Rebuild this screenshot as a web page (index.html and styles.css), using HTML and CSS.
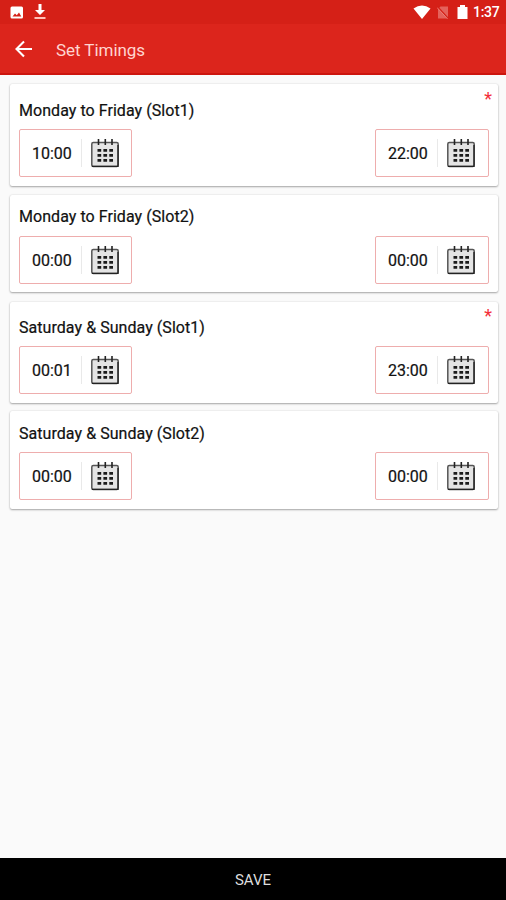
FILE: index.html
```html
<!DOCTYPE html>
<html lang="en">
<head>
<meta charset="utf-8">
<title>Set Timings</title>
<link rel="stylesheet" href="styles.css">
</head>
<body>
<svg class="defs" width="0" height="0" aria-hidden="true">
  <symbol id="calendar" viewBox="0 0 30 30">
    <rect x="1.8" y="4.5" width="26.4" height="24" rx="1.5" fill="#e4e4e4" stroke="#555" stroke-width="1.5"/>
    <path d="M2 28.4H28V7" fill="none" stroke="#222" stroke-width="1.3"/>
    <path d="M8.5 1V7M15.3 1V7M22 1V7" stroke="#222" stroke-width="1.6"/>
    <path d="M7.5 12.4H23M7.5 17.4H23M7.5 22.4H23" stroke="#1b1b1b" stroke-width="2.7" stroke-dasharray="3.7 2.2"/>
  </symbol>
</svg>
<header class="status">
  <svg class="picture" viewBox="0 0 14 13"><rect x=".5" y=".5" width="12.5" height="12" rx="1.5" fill="#fff"/><path d="M2.5 10.5 5 7.5 6.8 9.3 9 6.5 11.3 10.5Z" fill="#d52017"/></svg>
  <svg class="download" viewBox="0 0 12 16"><path d="M4.5 0H7.5V6H11L6 11 1 6H4.5Z" fill="#fff"/><path d="M.5 14H11.5" stroke="#ffc0b8" stroke-width="2"/></svg>
  <svg class="wifi" viewBox="0 0 18 14"><path d="M9 14 .5 3.5Q9-2.5 17.5 3.5Z" fill="#fff"/></svg>
  <svg class="sim" viewBox="0 0 12 13"><path d="M3.5.5H11V12.5H1V3Z" fill="#e4625b"/><path d="M.5.8 11.5 12.8" stroke="#d52017" stroke-width="1.6"/><path d="M0 1.5 10.5 12.8" stroke="#f09089" stroke-width=".8"/></svg>
  <svg class="battery" viewBox="0 0 11 14"><path d="M3 0H8V2H10.5V14H.5V2H3Z" fill="#fff"/></svg>
  <span class="clock">1:37</span>
</header>
<nav class="toolbar">
  <svg class="back" viewBox="0 0 18 18"><path d="M17 9H2M9 1.5 1.5 9 9 16.5" fill="none" stroke="#fff" stroke-width="2.1"/></svg>
  <h1>Set Timings</h1>
</nav>
<main>
  <section class="card weekday-one">
    <span class="required">*</span>
    <h2>Monday to Friday (Slot1)</h2>
    <div class="times">
      <div class="time"><span>10:00</span><svg><use href="#calendar"/></svg></div>
      <div class="time"><span>22:00</span><svg><use href="#calendar"/></svg></div>
    </div>
  </section>
  <section class="card weekday-two">
    <h2>Monday to Friday (Slot2)</h2>
    <div class="times">
      <div class="time"><span>00:00</span><svg><use href="#calendar"/></svg></div>
      <div class="time"><span>00:00</span><svg><use href="#calendar"/></svg></div>
    </div>
  </section>
  <section class="card weekend-one">
    <span class="required">*</span>
    <h2>Saturday &amp; Sunday (Slot1)</h2>
    <div class="times">
      <div class="time"><span>00:01</span><svg><use href="#calendar"/></svg></div>
      <div class="time"><span>23:00</span><svg><use href="#calendar"/></svg></div>
    </div>
  </section>
  <section class="card weekend-two">
    <h2>Saturday &amp; Sunday (Slot2)</h2>
    <div class="times">
      <div class="time"><span>00:00</span><svg><use href="#calendar"/></svg></div>
      <div class="time"><span>00:00</span><svg><use href="#calendar"/></svg></div>
    </div>
  </section>
</main>
<button class="save">SAVE</button>
</body>
</html>
```
FILE: styles.css
```css
* { box-sizing: border-box; }
body {
  margin: 0;
  height: 900px;
  display: flex;
  flex-direction: column;
  background: #fafafa;
  color: #111;
  font-family: Roboto, sans-serif;
  overflow: hidden;
}
svg { display: block; flex: none; }
.defs { position: absolute; }
.status {
  flex: none;
  height: 24px;
  display: flex;
  align-items: center;
  padding: 0 7px 0 10px;
  background: #d52017;
}
.picture { width: 14px; height: 13px; }
.download { width: 12px; height: 16px; margin-left: 10px; }
.wifi { width: 18px; height: 14px; margin-left: auto; }
.sim { width: 12px; height: 13px; margin-left: 6px; }
.battery { width: 11px; height: 14px; margin-left: 8px; }
.clock {
  width: 26px;
  margin-left: 5px;
  color: #fff;
  font-size: 14px;
  font-weight: 500;
  letter-spacing: -.3px;
  line-height: 24px;
  white-space: nowrap;
}
.toolbar {
  flex: none;
  height: 51px;
  display: flex;
  align-items: center;
  padding: 0 15px;
  background: #dc251c;
  border-bottom: 2px solid #cc150e;
}
.back { width: 18px; height: 18px; }
.toolbar h1 {
  margin: 2px 0 0 23px;
  color: #ffd5d0;
  font-size: 17px;
  font-weight: 400;
  letter-spacing: -.05px;
  line-height: 24px;
}
main { flex: 1; padding: 9px 8px 0 10px; }
.card {
  position: relative;
  padding: 0 9px;
  background: #fff;
  border-radius: 2px;
  box-shadow: 0 1px 2px rgba(0, 0, 0, .32), 0 0 2px rgba(0, 0, 0, .12);
}
.weekday-one { height: 102px; padding-top: 17px; }
.weekday-two { height: 97px; padding-top: 12px; margin-top: 9px; }
.weekday-two h2 { margin-bottom: 9px; }
.weekend-one { height: 101px; padding-top: 16px; margin-top: 10px; }
.weekend-two { height: 98px; padding-top: 13px; margin-top: 8px; }
.card h2 {
  margin: 0 0 8px;
  font-size: 16px;
  font-weight: 400;
  letter-spacing: .05px;
  line-height: 20px;
  -webkit-text-stroke: .2px #111;
}
.card.weekday-two h2 { margin-bottom: 9px; }
.required {
  position: absolute;
  top: 5px;
  right: 6px;
  color: #f3303a;
  font-size: 18px;
  line-height: 20px;
}
.weekend-one .required { top: 4px; }
.times { display: flex; justify-content: space-between; }
.time {
  width: 113px;
  height: 48px;
  display: flex;
  align-items: center;
  border: 1px solid #eeadad;
  border-radius: 2px;
}
.times .time:last-child { width: 114px; }
.time span {
  width: 62px;
  height: 28px;
  padding-left: 12px;
  border-right: 1px solid #e9e9e9;
  font-size: 16px;
  line-height: 30px;
  -webkit-text-stroke: .2px #111;
}
.time svg { width: 30px; height: 30px; margin-left: 8px; }
.save {
  flex: none;
  height: 42px;
  padding: 2px 0 0;
  border: 0;
  background: #000;
  color: #ddd;
  font-family: inherit;
  font-size: 15px;
}
```
